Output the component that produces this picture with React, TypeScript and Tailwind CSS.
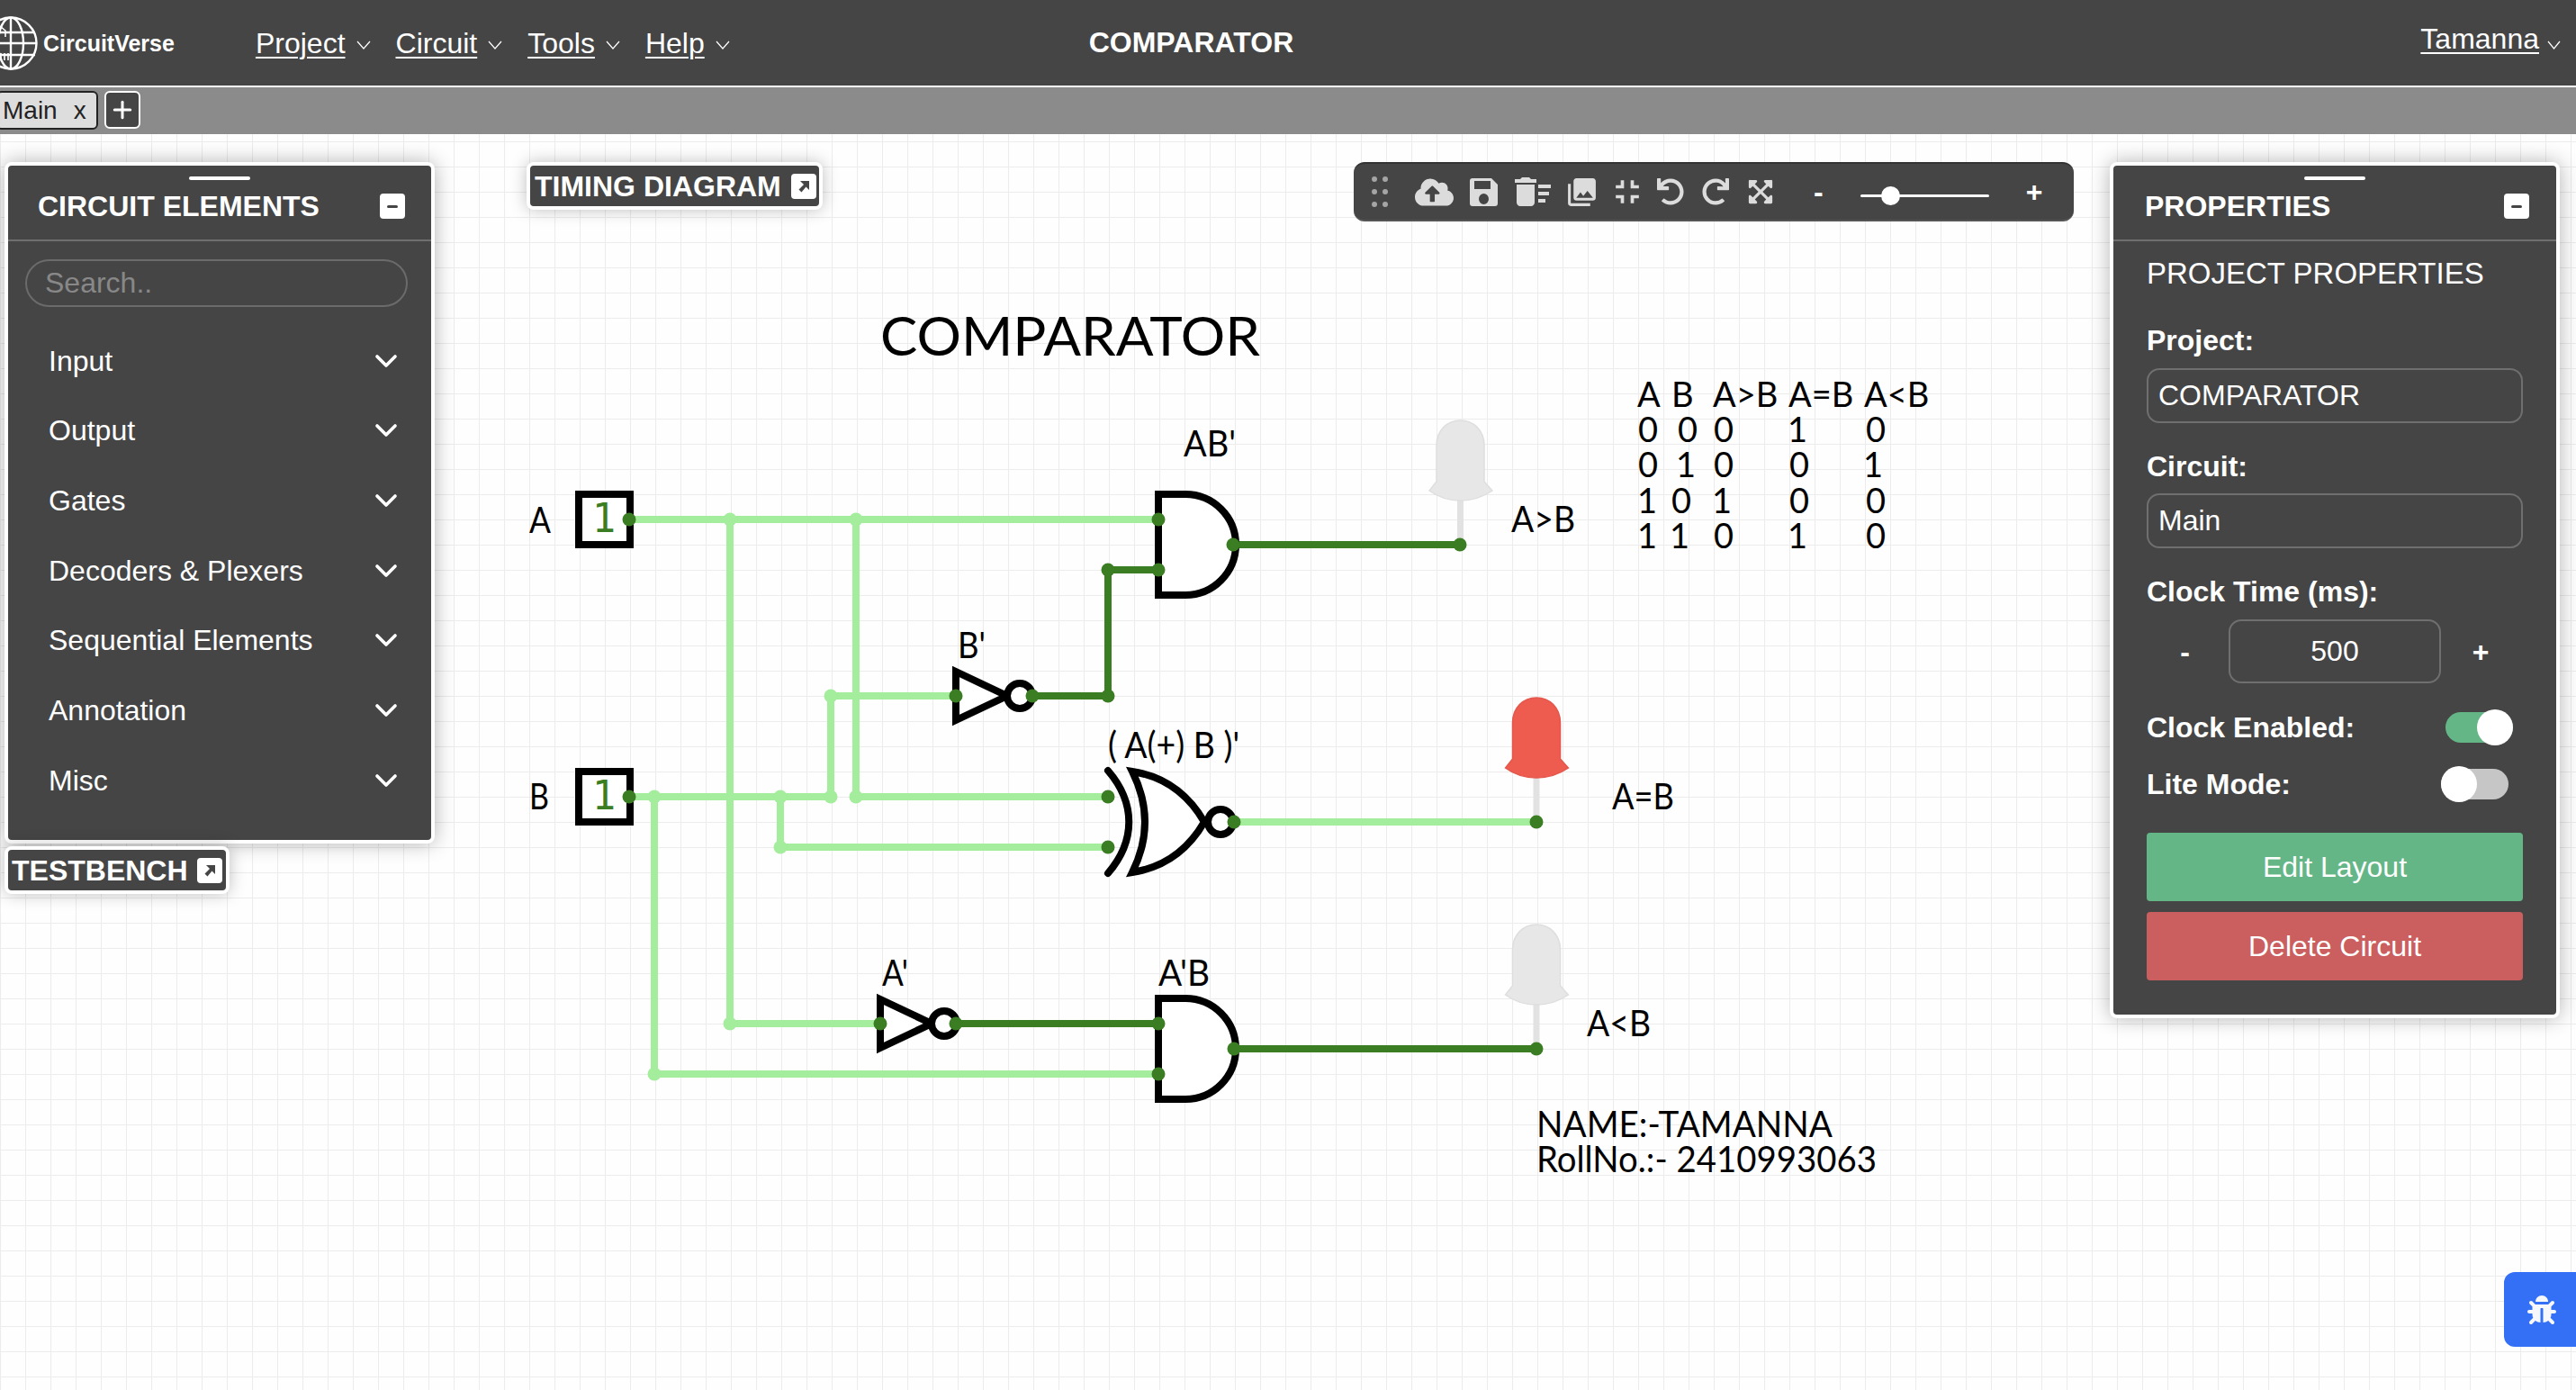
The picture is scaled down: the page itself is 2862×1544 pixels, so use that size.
import { ChevronDown, Plus } from "lucide-react";
import { FaBug, FaCloudUploadAlt, FaExpandArrowsAlt, FaRedo, FaUndo } from "react-icons/fa";
import { MdDeleteSweep, MdFullscreenExit, MdPhotoLibrary } from "react-icons/md";

const elements = ["Input", "Output", "Gates", "Decoders & Plexers", "Sequential Elements", "Annotation", "Misc"];

function SaveIcon({ size }: { size: number }) {
  return (
    <svg width={size} height={size} viewBox="0 0 31 31" fill="currentColor">
      <path
        fillRule="evenodd"
        d="M3 0H24L31 7V28A3 3 0 0 1 28 31H3A3 3 0 0 1 0 28V3A3 3 0 0 1 3 0ZM5 3V12H23V3ZM15.500 17A5.500 6 0 1 0 15.501 29A5.500 6 0 1 0 15.500 17Z"
      />
    </svg>
  );
}

const tools = [
  { Icon: FaCloudUploadAlt, size: 43, slot: "ml-[30px] w-[43px]" },
  { Icon: SaveIcon, size: 31, slot: "ml-[18px] w-[31px]" },
  { Icon: MdDeleteSweep, size: 48, slot: "ml-[18px] w-[41px]" },
  { Icon: MdPhotoLibrary, size: 37, slot: "ml-[19px] w-[31px]" },
  { Icon: MdFullscreenExit, size: 44, slot: "ml-[19px] w-[31px]" },
  { Icon: FaUndo, size: 30, slot: "ml-[17px] w-[31px]" },
  { Icon: FaRedo, size: 30, slot: "ml-[19px] w-[32px]" },
  { Icon: FaExpandArrowsAlt, size: 30, slot: "ml-[20px] w-[28px]" },
];

const LIGHT = "#a3ed9c";
const DARK = "#3a7d22";

const lightWires = [
  "M699 577H1287",
  "M811 577V1137H978",
  "M951 577V885H1231",
  "M699 885H923V773H1062",
  "M867 885V941H1231",
  "M727 885V1193H1287",
  "M1371 913H1707",
];
const darkWires = ["M1147 773H1231V633H1287", "M1370 605H1622", "M1062 1137H1287", "M1371 1165H1707"];

const lightNodes = [
  [811, 577],
  [951, 577],
  [727, 885],
  [867, 885],
  [923, 885],
  [951, 885],
  [923, 773],
  [867, 941],
  [811, 1137],
  [727, 1193],
];
const darkNodes = [
  [699, 577],
  [699, 885],
  [1287, 577],
  [1287, 633],
  [1370, 605],
  [1622, 605],
  [1231, 633],
  [1231, 773],
  [1062, 773],
  [1147, 773],
  [1231, 885],
  [1231, 941],
  [1371, 913],
  [1707, 913],
  [978, 1137],
  [1062, 1137],
  [1287, 1137],
  [1287, 1193],
  [1371, 1165],
  [1707, 1165],
];

const labels: [string, number, number, number][] = [
  ["A", 588, 592, 24],
  ["B", 588, 899, 22],
  ["AB'", 1315, 507, 58],
  ["B'", 1064, 731, 31],
  ["( A(+) B )'", 1231, 842, 146],
  ["A>B", 1679, 591, 71],
  ["A=B", 1791, 899, 69],
  ["A<B", 1763, 1151, 71],
  ["A'", 980, 1095, 29],
  ["A'B", 1287, 1095, 57],
  ["NAME:-TAMANNA", 1707, 1263, 329],
  ["RollNo.:- 2410993063", 1707, 1302, 378],
];

const table: [string, number, number][] = [
  ["A", 1819, 452],
  ["B", 1857, 452],
  ["A>B", 1903, 452],
  ["A=B", 1987, 452],
  ["A<B", 2071, 452],
  ["0", 1820, 491],
  ["0", 1864, 491],
  ["0", 1904, 491],
  ["1", 1986, 491],
  ["0", 2073, 491],
  ["0", 1820, 530],
  ["1", 1862, 530],
  ["0", 1904, 530],
  ["0", 1988, 530],
  ["1", 2070, 530],
  ["1", 1819, 570],
  ["0", 1857, 570],
  ["1", 1902, 570],
  ["0", 1988, 570],
  ["0", 2073, 570],
  ["1", 1819, 609],
  ["1", 1855, 609],
  ["0", 1904, 609],
  ["1", 1986, 609],
  ["0", 2073, 609],
];

function NavChevron() {
  return (
    <svg width="16" height="10" viewBox="0 0 16 10" className="ml-3 mt-1" fill="none" stroke="white" strokeWidth="1.2">
      <path d="M1 1l7 8 7-8" />
    </svg>
  );
}

function NavItem({ label }: { label: string }) {
  return (
    <div className="flex items-center">
      <span className="underline underline-offset-[4px] decoration-2">{label}</span>
      <NavChevron />
    </div>
  );
}

function Logo() {
  return (
    <svg width="42" height="62" viewBox="0 0 42 62" fill="none" stroke="white" strokeWidth="2.4">
      <circle cx="12" cy="31" r="28.5" />
      <ellipse cx="12" cy="31" rx="14" ry="28.5" />
      <path d="M12 2v58M-14 19h53M-14 31h55M-14 44h53" />
      <path d="M0 12l6 5v7M1 50v-8M5 50v-8M9 50v-8" strokeWidth="1.6" />
    </svg>
  );
}

function MinusBox() {
  return (
    <div className="flex h-7 w-7 items-center justify-center rounded bg-white">
      <div className="h-[3px] w-3 rounded-sm bg-[#454545]" />
    </div>
  );
}

function PopoutIcon() {
  return (
    <svg width="28" height="28" viewBox="0 0 28 28" className="shrink-0">
      <rect width="28" height="28" rx="4" fill="white" />
      <path d="M10 8h10v10l-3.500-3.500-5 6-3-3 5.500-5.500z" fill="#454545" />
    </svg>
  );
}

function PanelHead({ title, bar }: { title: string; bar: string }) {
  return (
    <div className="border-b-2 border-[#6f6f6f] pt-3 pb-2">
      <div className="mx-auto h-1 w-[68px] rounded-sm bg-white" />
      <div className={bar}>
        <span className="font-bold">{title}</span>
        <MinusBox />
      </div>
    </div>
  );
}

function PopoutTag({ title, place }: { title: string; place: string }) {
  return (
    <div className={place}>
      <span className="font-bold leading-none">{title}</span>
      <PopoutIcon />
    </div>
  );
}

function Led({ dx, dy, color, edge }: { dx: number; dy: number; color: string; edge: string }) {
  return (
    <g transform={`translate(${dx} ${dy})`}>
      <path d="M1622.5 545V605" stroke="#e2e2e2" strokeWidth="7" />
      <path
        d="M1596 535V495C1596 478 1608 467 1622.5 467C1637 467 1649 478 1649 495V535L1658 545Q1642 556 1622.5 556Q1603 556 1588 545Z"
        fill={color}
        stroke={edge}
        strokeWidth="1.5"
      />
    </g>
  );
}

function NotGate({ dx, dy }: { dx: number; dy: number }) {
  return (
    <g transform={`translate(${dx} ${dy})`} fill="white" stroke="black" strokeWidth="8">
      <path d="M1062 746V800L1119 773Z" />
      <circle cx="1133" cy="773" r="14" />
    </g>
  );
}

function AndGate({ dy }: { dy: number }) {
  return (
    <path
      transform={`translate(0 ${dy})`}
      d="M1287 549H1317A56 56 0 0 1 1317 661H1287Z"
      fill="white"
      stroke="black"
      strokeWidth="8"
    />
  );
}

function Circuit() {
  return (
    <svg
      width="2862"
      height="1395"
      viewBox="0 149 2862 1395"
      className="absolute inset-0 font-['Lato',sans-serif] font-normal"
    >
      {lightWires.map((d) => (
        <path key={d} d={d} fill="none" stroke={LIGHT} strokeWidth="8" />
      ))}
      {darkWires.map((d) => (
        <path key={d} d={d} fill="none" stroke={DARK} strokeWidth="8" />
      ))}

      {[545, 853].map((y) => (
        <g key={y}>
          <rect x="643" y={y + 4} width="57" height="56" fill="white" stroke="black" strokeWidth="8" />
          <text x="671" y={y + 46} textAnchor="middle" fontSize="44" fill={DARK} className="font-['DejaVu_Sans_Mono',monospace]">
            1
          </text>
        </g>
      ))}

      <AndGate dy={0} />
      <AndGate dy={560} />
      <NotGate dx={0} dy={0} />
      <NotGate dx={-84} dy={364} />

      <path d="M1231 856C1262 892 1262 934 1231 970" fill="none" stroke="black" strokeWidth="8" strokeLinecap="round" />
      <path d="M1258 857Q1310 865 1338 913Q1310 961 1258 969Q1286 913 1258 857Z" fill="white" stroke="black" strokeWidth="8" />
      <circle cx="1356" cy="913" r="14" fill="white" stroke="black" strokeWidth="8" />

      <Led dx={0} dy={0} color="#e7e7e7" edge="#dedede" />
      <Led dx={84.5} dy={308} color="#ee5b4f" edge="#e4574c" />
      <Led dx={84.5} dy={560} color="#e7e7e7" edge="#dedede" />

      {lightNodes.map(([cx, cy]) => (
        <circle key={`${cx}-${cy}`} cx={cx} cy={cy} r="7.5" fill={LIGHT} />
      ))}
      {darkNodes.map(([cx, cy]) => (
        <circle key={`${cx}-${cy}`} cx={cx} cy={cy} r="7.5" fill={DARK} />
      ))}

      <text x="978" y="395" fontSize="60" textLength="422" lengthAdjust="spacingAndGlyphs">
        COMPARATOR
      </text>
      {labels.map(([t, x, y, w]) => (
        <text key={t} x={x} y={y} fontSize="40" textLength={w} lengthAdjust="spacingAndGlyphs">
          {t}
        </text>
      ))}
      {table.map(([t, x, y]) => (
        <text key={`${x}-${y}`} x={x} y={y} fontSize="38">
          {t}
        </text>
      ))}
    </svg>
  );
}

function Toggle({ on }: { on: boolean }) {
  return (
    <div className={on ? "relative mr-[11px] h-[34px] w-[75px] rounded-full bg-[#65b687]" : "relative mr-[16px] h-[34px] w-[75px] rounded-full bg-[#c6c6c6]"}>
      <div className={on ? "absolute -top-[3px] right-0 h-10 w-10 rounded-full bg-white" : "absolute -top-[3px] left-0 h-10 w-10 rounded-full bg-white"} />
    </div>
  );
}

export default function App() {
  return (
    <div className="flex h-screen w-screen flex-col overflow-hidden bg-white font-['Liberation_Sans',Arial,sans-serif] text-[32px] leading-9 text-white">
      <header className="flex h-[97px] shrink-0 items-center border-b-2 border-white bg-[#454545] pr-[17px]">
        <Logo />
        <span className="ml-[6px] text-[25px] font-bold">CircuitVerse</span>
        <nav className="ml-[90px] flex gap-7">
          {["Project", "Circuit", "Tools", "Help"].map((n) => (
            <NavItem key={n} label={n} />
          ))}
        </nav>
        <span className="ml-[399px] -translate-y-[1px] font-bold">COMPARATOR</span>
        <div className="ml-auto flex items-center">
          <span className="-translate-y-[5px] underline underline-offset-[4px] decoration-2">Tamanna</span>
          <svg width="15" height="10" viewBox="0 0 15 10" className="ml-[9px] mt-1" fill="none" stroke="white" strokeWidth="1.2">
            <path d="M1 1l6.500 8 6.500-8" />
          </svg>
        </div>
      </header>

      <div className="flex h-[52px] shrink-0 items-start gap-[7px] bg-[#8b8b8b] pt-1">
        <div className="-ml-1 flex h-[43px] w-[113px] items-center rounded-md border-2 border-[#222] bg-[#ddd] pl-[5px] text-[28px] text-[#222]">
          <span>Main</span>
          <span className="ml-[18px]">x</span>
        </div>
        <div className="flex h-[42px] w-10 items-center justify-center rounded-md border-2 border-white bg-[#454545]">
          <Plus size={30} strokeWidth={2.4} />
        </div>
      </div>

      <main className="relative flex-1 bg-[#fefefe] bg-[linear-gradient(to_right,#ececec_1px,transparent_1px),linear-gradient(to_bottom,#ececec_1px,transparent_1px)] bg-size-[28px_28px] bg-position-[0_8px]">
        <Circuit />

        {/* left panel */}
        <aside className="absolute top-[31px] left-[5px] w-[478px] rounded-lg border-4 border-white bg-[#454545] pb-[27px] shadow-[0_0_22px_rgba(0,0,0,0.3)]">
          <PanelHead title="CIRCUIT ELEMENTS" bar="flex h-[58px] items-center justify-between pr-[29px] pl-[33px]" />
          <input
            placeholder="Search.."
            className="mt-5 ml-[19px] block h-[53px] w-[425px] rounded-full border-2 border-[#6b6b6b] bg-transparent pl-[20px] outline-none placeholder:text-[#888]"
          />
          <ul className="mt-[21px]">
            {elements.map((el) => (
              <li key={el} className="flex h-[77.67px] items-center justify-between pr-[30px] pl-[45px]">
                <span>{el}</span>
                <ChevronDown size={40} strokeWidth={2.2} />
              </li>
            ))}
          </ul>
        </aside>

        <PopoutTag
          title="TESTBENCH"
          place="absolute top-[791px] left-[5px] flex h-[53px] w-[250px] items-center gap-[10px] rounded-lg border-4 border-white bg-[#454545] pl-1 shadow-[0_0_18px_rgba(0,0,0,0.25)]"
        />
        <PopoutTag
          title="TIMING DIAGRAM"
          place="absolute top-[31px] left-[585px] flex h-[53px] w-[329px] items-center gap-[11px] rounded-lg border-4 border-white bg-[#454545] pl-[5px] shadow-[0_0_18px_rgba(0,0,0,0.25)]"
        />

        {/* toolbar */}
        <div className="absolute top-[31px] left-[1504px] flex h-[66px] w-[800px] items-center rounded-xl border-t-2 border-b-2 border-t-[#333] border-b-[#555] bg-[#454545] pl-5 text-[#dcdcdc]">
          <div className="grid w-[18px] grid-cols-2 gap-x-[6px] gap-y-2">
            {[0, 1, 2, 3, 4, 5].map((d) => (
              <div key={d} className="h-[6px] w-[6px] rounded-full bg-[#a5a5a5]" />
            ))}
          </div>
          {tools.map(({ Icon, size, slot }, i) => (
            <span key={i} className={`${slot} flex justify-center`}>
              <Icon size={size} className="shrink-0" />
            </span>
          ))}
          <span className="ml-[45px] font-bold text-white">-</span>
          <div className="relative mt-2 ml-[41px] h-[3px] w-[143px] rounded bg-white">
            <div className="absolute -top-[9px] left-[23px] h-[21px] w-[21px] rounded-full bg-white" />
          </div>
          <span className="ml-[41px] font-bold text-white">+</span>
        </div>

        {/* right panel */}
        <aside className="absolute top-[31px] right-[18px] w-[500px] rounded-lg border-4 border-white bg-[#454545] shadow-[0_0_22px_rgba(0,0,0,0.3)]">
          <PanelHead title="PROPERTIES" bar="flex h-[58px] items-center justify-between pr-[30px] pl-[35px]" />
          <div className="px-[37px] pb-[38px]">
            <p className="mt-[18px] text-[33px]">PROJECT PROPERTIES</p>
            <p className="mt-[38px] font-bold">Project:</p>
            <input
              readOnly
              value="COMPARATOR"
              className="mt-[13px] block h-[61px] w-full rounded-[14px] border-2 border-[#6f6f6f] bg-transparent pl-[11px] outline-none"
            />
            <p className="mt-[30px] font-bold">Circuit:</p>
            <input
              readOnly
              value="Main"
              className="mt-3 block h-[61px] w-full rounded-[14px] border-2 border-[#6f6f6f] bg-transparent pl-[11px] outline-none"
            />
            <p className="mt-[30px] font-bold">Clock Time (ms):</p>
            <div className="mt-[13px] flex h-[71px] items-center font-bold">
              <span className="w-[91px] pr-[6px] text-center">-</span>
              <input
                readOnly
                value="500"
                className="block h-full w-[236px] rounded-[14px] border-2 border-[#6f6f6f] bg-transparent text-center font-normal outline-none"
              />
              <span className="w-[91px] pr-[3px] text-center">+</span>
            </div>
            <div className="mt-[31px] flex items-center justify-between font-bold">
              <span>Clock Enabled:</span>
              <Toggle on />
            </div>
            <div className="mt-[27px] flex items-center justify-between font-bold">
              <span>Lite Mode:</span>
              <Toggle on={false} />
            </div>
            <button className="mt-9 block h-[76px] w-full rounded bg-[#65b687] text-center">Edit Layout</button>
            <button className="mt-3 block h-[76px] w-full rounded bg-[#cb5e5e] text-center">Delete Circuit</button>
          </div>
        </aside>

        {/* report bug */}
        <div className="absolute top-[1264px] right-0 flex h-[83px] w-20 items-center justify-start rounded-l-xl bg-[#3370f5] pl-[26px] text-[#f5f7fb]">
          <FaBug size={32} />
        </div>
      </main>
    </div>
  );
}
